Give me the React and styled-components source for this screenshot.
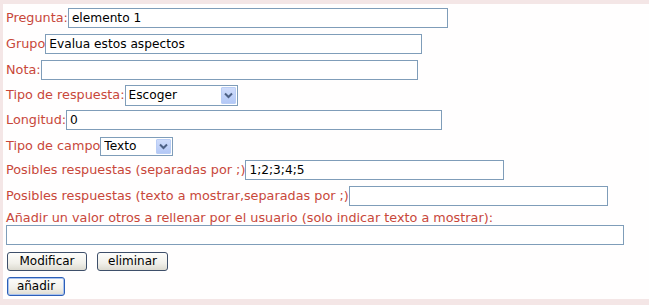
import React from "react";
import styled, { createGlobalStyle } from "styled-components";

const GlobalStyle = createGlobalStyle`
    html, body {
        margin: 0;
        padding: 0;
        background: #f4e6e6;
    }
    body {
        font-family: 'DejaVu Sans', Verdana, sans-serif;
        font-size: 12px;
    }
`;

const Panel = styled.div`
    margin: 4px 0 0 3px;
    height: 295px;
    background: #fffefe;
    padding: 4px 0 0 3px;
    box-sizing: border-box;
`;

const Row = styled.div`
    display: flex;
    align-items: center;
    height: 20px;
    margin-bottom: ${props => props.gap || 6}px;
`;

const Label = styled.label`
    color: #c8473a;
    font-size: 12.8px;
    white-space: nowrap;
    line-height: 20px;
`;

const TextInput = styled.input`
    box-sizing: border-box;
    width: ${props => props.width}px;
    height: 20px;
    border: 1px solid #7f9db9;
    background: #fff;
    padding: 0 3px;
    margin: 0;
    font-family: 'DejaVu Sans', Verdana, sans-serif;
    font-size: 12.2px;
    color: #000;
    outline: none;
`;

const SelectBox = styled.div`
    position: relative;
    width: ${props => props.width}px;
    height: ${props => props.height}px;
`;

const Select = styled.select`
    appearance: none;
    box-sizing: border-box;
    width: 100%;
    height: 100%;
    border: 1px solid #7f9db9;
    background: #fff;
    padding: 0 0 0 3px;
    margin: 0;
    font-family: 'DejaVu Sans', Verdana, sans-serif;
    font-size: 12.2px;
    color: #000;
    outline: none;
`;

const Arrow = styled.span`
    position: absolute;
    top: 2px;
    right: 2px;
    bottom: 2px;
    width: 15px;
    border: 1px solid #b9cdf5;
    border-radius: 1px;
    background: linear-gradient(#cfdcfb, #b3c8f6);
    box-sizing: border-box;
    display: flex;
    align-items: center;
    justify-content: center;
    pointer-events: none;
`;

const BlockLabel = styled(Label)`
    display: block;
    line-height: 14px;
    margin-bottom: 0;
`;

const ButtonRow = styled.div`
    display: flex;
    gap: 10px;
    margin: ${props => props.top}px 0 0 1px;
`;

const Button = styled.button`
    box-sizing: border-box;
    width: ${props => props.width}px;
    height: 19px;
    padding: 0;
    margin: 0;
    border: 1px solid ${props => (props.focused ? "#2c5fb8" : "#3e4f6a")};
    box-shadow: ${props => (props.focused ? "inset 0 0 0 1px #a9c2ee" : "none")};
    border-radius: 3px;
    background: linear-gradient(#fdfdfb, #f1f0ea 60%, #dcdad0);
    font-family: 'DejaVu Sans', Verdana, sans-serif;
    font-size: 12px;
    color: #000;
    line-height: 15px;
`;

function Chevron() {
    return (
        <svg width="9" height="7" viewBox="0 0 9 7">
            <path d="M1 1.5 L4.5 5 L8 1.5" fill="none" stroke="#4d6185" strokeWidth="2" />
        </svg>
    );
}

function App() {
    return (
        <>
            <GlobalStyle />
            <Panel>
                <Row>
                    <Label>Pregunta:</Label>
                    <TextInput width={380} defaultValue="elemento 1" />
                </Row>
                <Row>
                    <Label>Grupo</Label>
                    <TextInput width={377} defaultValue="Evalua estos aspectos" />
                </Row>
                <Row gap={5}>
                    <Label>Nota:</Label>
                    <TextInput width={377} defaultValue="" />
                </Row>
                <Row gap={5}>
                    <Label>Tipo de respuesta:</Label>
                    <SelectBox width={113} height={21}>
                        <Select defaultValue="Escoger">
                            <option>Escoger</option>
                        </Select>
                        <Arrow><Chevron /></Arrow>
                    </SelectBox>
                </Row>
                <Row>
                    <Label>Longitud:</Label>
                    <TextInput width={376} defaultValue="0" />
                </Row>
                <Row gap={4}>
                    <Label>Tipo de campo</Label>
                    <SelectBox width={73} height={19}>
                        <Select defaultValue="Texto">
                            <option>Texto</option>
                        </Select>
                        <Arrow><Chevron /></Arrow>
                    </SelectBox>
                </Row>
                <Row>
                    <Label>Posibles respuestas (separadas por ;)</Label>
                    <TextInput width={259} defaultValue="1;2;3;4;5" />
                </Row>
                <Row gap={5}>
                    <Label>Posibles respuestas (texto a mostrar,separadas por ;)</Label>
                    <TextInput width={259} defaultValue="" />
                </Row>
                <BlockLabel>Añadir un valor otros a rellenar por el usuario (solo indicar texto a mostrar):</BlockLabel>
                <TextInput width={618} defaultValue="" />
                <ButtonRow top={7}>
                    <Button width={80}>Modificar</Button>
                    <Button width={71}>eliminar</Button>
                </ButtonRow>
                <ButtonRow top={6}>
                    <Button width={58} focused>añadir</Button>
                </ButtonRow>
            </Panel>
        </>
    );
}

export default App;
